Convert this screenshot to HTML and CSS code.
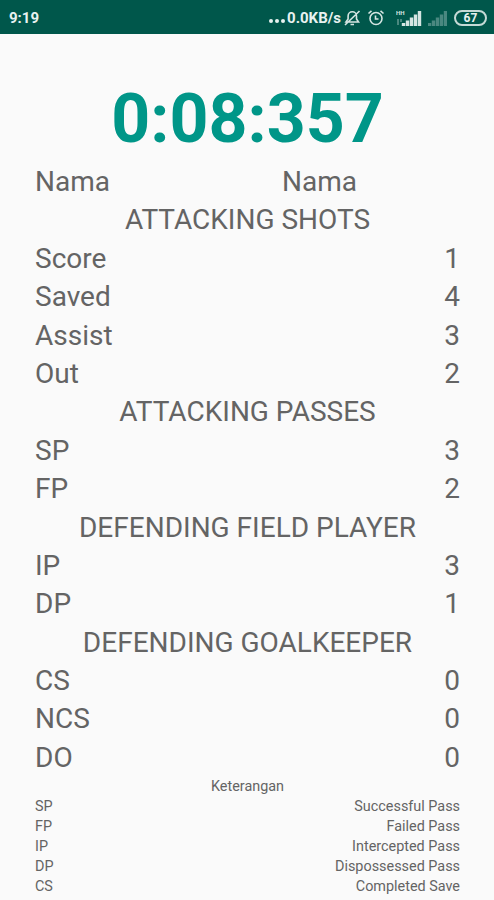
FILE: index.html
```html
<!DOCTYPE html>
<html lang="id">
<head>
    <meta charset="UTF-8">
    <title>Hasil</title>
    <link rel="stylesheet" href="styles.css">
</head>
<body>
    <div class="status-bar">
        <span class="clock">9:19</span>
        <div class="status-icons">
            <span class="dots"><i></i><i></i><i></i></span>
            <span class="speed">0.0KB/s</span>
            <svg class="bell" width="17" height="18" viewBox="0 0 17 18">
                <path d="M2 13h12.500l-2-3V7a4.200 4.200 0 0 0-8.400 0v3zM6.500 15.500h3.500M1 16L15.500 2" />
            </svg>
            <svg class="alarm" width="18" height="18" viewBox="0 0 18 18">
                <circle cx="9" cy="9.500" r="6" />
                <path d="M8.500 6.500v3.500h3M1.500 4.500l3-2.700M16.500 4.500l-3-2.700" />
            </svg>
            <svg class="signal" width="27" height="18" viewBox="0 0 27 18">
                <text x="0" y="6">HH</text>
                <path d="M2 16V10M5 13V10" class="faint" />
                <path d="M7.500 17v-3M11.500 17v-5.500M15.500 17V8.500M19.500 17V5.500M23.500 17V2" />
            </svg>
            <svg class="signal weak" width="19" height="18" viewBox="0 0 19 18">
                <path d="M1.500 17v-3M5.500 17v-5.500M9.500 17V8.500M13.500 17V5.500M17.500 17V2" />
            </svg>
            <span class="battery">67</span>
        </div>
    </div>

    <div class="content">
        <h1 class="timer">0:08:357</h1>
        <div class="names"><span>Nama</span><span>Nama</span></div>

        <div class="title">ATTACKING SHOTS</div>
        <div class="row"><span>Score</span><span>1</span></div>
        <div class="row"><span>Saved</span><span>4</span></div>
        <div class="row"><span>Assist</span><span>3</span></div>
        <div class="row"><span>Out</span><span>2</span></div>

        <div class="title">ATTACKING PASSES</div>
        <div class="row"><span>SP</span><span>3</span></div>
        <div class="row"><span>FP</span><span>2</span></div>

        <div class="title">DEFENDING FIELD PLAYER</div>
        <div class="row"><span>IP</span><span>3</span></div>
        <div class="row"><span>DP</span><span>1</span></div>

        <div class="title">DEFENDING GOALKEEPER</div>
        <div class="row"><span>CS</span><span>0</span></div>
        <div class="row"><span>NCS</span><span>0</span></div>
        <div class="row"><span>DO</span><span>0</span></div>

        <div class="legend">
            <div class="legend-title">Keterangan</div>
            <div class="legend-row"><span>SP</span><span>Successful Pass</span></div>
            <div class="legend-row"><span>FP</span><span>Failed Pass</span></div>
            <div class="legend-row"><span>IP</span><span>Intercepted Pass</span></div>
            <div class="legend-row"><span>DP</span><span>Dispossessed Pass</span></div>
            <div class="legend-row"><span>CS</span><span>Completed Save</span></div>
            <div class="legend-row"><span>NCS</span><span>Not Completed Save</span></div>
        </div>
    </div>
</body>
</html>
```
FILE: styles.css
```css
body {
    margin: 0;
    height: 900px;
    overflow: hidden;
    background: #fafafa;
    color: #646464;
    font-family: Roboto, "Liberation Sans", sans-serif;
}

.status-bar {
    display: flex;
    justify-content: space-between;
    align-items: center;
    height: 34px;
    padding: 2px 7px 0 9px;
    box-sizing: border-box;
    background: #00574b;
    color: #e8f2f0;
    font-size: 15px;
    font-weight: bold;
}

.status-icons {
    display: flex;
    align-items: center;
}

.status-icons svg {
    fill: none;
    stroke: #d5e5e2;
    stroke-width: 1.6;
}

.dots {
    display: flex;
    gap: 2px;
    margin: 6px 2px 0 0;
}

.dots i {
    width: 4px;
    height: 4px;
    border-radius: 50%;
    background: #e8f2f0;
}

.status-icons .bell {
    margin-left: 3px;
}

.alarm {
    margin-left: 6px;
}

.signal {
    margin-left: 11px;
}

.status-icons .signal path {
    stroke-width: 3.4;
}

.status-icons .signal .faint {
    stroke-width: 2;
    opacity: 0.35;
}

.status-icons .signal text {
    fill: #d5e5e2;
    stroke: none;
    font-size: 6px;
}

.status-icons .weak {
    margin-left: 5px;
    opacity: 0.35;
}

.battery {
    width: 29px;
    height: 12px;
    line-height: 12px;
    margin-left: 7px;
    border: 2px solid #c5dad6;
    border-radius: 8px;
    font-size: 12px;
    text-align: center;
}

.content {
    padding: 47px 34px 0 35px;
}

.timer {
    margin: 0;
    height: 82px;
    line-height: 76px;
    color: #009688;
    font-size: 68px;
    text-align: center;
}

.names,
.row,
.title {
    height: 38.4px;
    line-height: 38.4px;
    font-size: 28px;
}

.names {
    display: grid;
    grid-template-columns: 247px 1fr;
}

.row,
.legend-row {
    display: flex;
    justify-content: space-between;
}

.title {
    text-align: center;
}

.legend {
    font-size: 14.4px;
    line-height: 20px;
}

.legend-title {
    text-align: center;
}
```
